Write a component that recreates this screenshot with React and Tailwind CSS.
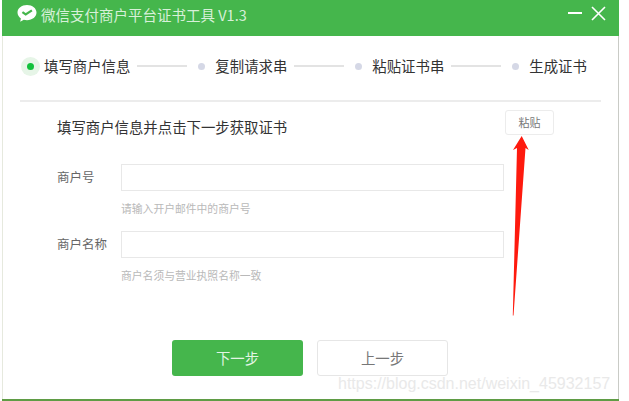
const cjk = { fontFamily: '"Noto Sans CJK SC", "Liberation Sans", sans-serif' };

function WeChatLogo() {
  return (
    <svg width="22" height="19" viewBox="0 0 22 19">
      <path d="M11 1C5.6 1 1.5 4.3 1.5 8.6c0 2.4 1.3 4.5 3.4 5.9L4.2 17.8l3.6-2c1 .3 2.1.4 3.2.4 5.4 0 9.5-3.4 9.5-7.6S16.4 1 11 1z" fill="#fff" />
      <path d="M6.4 8.2l3.3 2.3 6.2-4.2" fill="none" stroke="#45b64c" strokeWidth="2.2" />
    </svg>
  );
}

function Step({ label, active, line }) {
  return (
    <div className="flex items-center">
      {active ? (
        <div className="w-[19px] h-[19px] rounded-full bg-[#e6f5e7] flex items-center justify-center">
          <div className="w-[7px] h-[7px] rounded-full bg-[#12c13c]" />
        </div>
      ) : (
        <div className="w-[19px] h-[19px] flex items-center justify-center">
          <div className="w-[7px] h-[7px] rounded-full bg-[#d5d8e6]" />
        </div>
      )}
      <span className="ml-[4px] text-[14.4px] leading-5 text-[#333]">{label}</span>
      {line && <div className="ml-[7px] h-[2px] w-[50px] bg-[#e3e3e3]" />}
    </div>
  );
}

function Field({ label, hint }) {
  return (
    <div>
      <div className="flex items-center">
        <label className="w-[64px] text-[12.5px] text-[#666]">{label}</label>
        <input className="w-[383px] h-[27px] border border-[#e8e8e8] bg-white outline-none" />
      </div>
      <p className="ml-[64px] mt-[10px] text-[10.8px] leading-[14px] text-[#b9b9b9]">{hint}</p>
    </div>
  );
}

export default function App() {
  return (
    <div className="relative w-[629px] h-[401px] bg-white overflow-hidden" style={cjk}>
      <div className="w-[617px] h-[399px] ml-[2px] flex flex-col border-r border-l border-r-[#c9cbc6] border-l-[#e6e9de]">
        <header className="h-[36px] shrink-0 -mx-px bg-[#45b64c] flex items-start pl-[14px] pr-[13px] pt-[4px]">
          <WeChatLogo />
          <span className="ml-[3px] text-[14.5px] leading-[22px] text-[#d7f0d9]">微信支付商户平台证书工具 V1.3</span>
          <div className="ml-auto flex items-center gap-[9px] h-[18px]">
            <div className="w-[14px] h-[2px] bg-white" />
            <svg width="15" height="15" viewBox="0 0 15 15">
              <path d="M1 1l13 13M14 1L1 14" stroke="#fff" strokeWidth="1.6" />
            </svg>
          </div>
        </header>

        <nav className="mt-[20px] pl-[18px] flex items-center gap-[5px]">
          <Step label="填写商户信息" active line />
          <Step label="复制请求串" line />
          <Step label="粘贴证书串" line />
          <Step label="生成证书" />
        </nav>

        <div className="mt-[24px] ml-[17px] mr-[17px] h-[2px] bg-[#ececec]" />

        <div className="pl-[54px] pr-[64px] mt-[8px]">
          <div className="flex items-start justify-between h-[24px]">
            <h2 className="mt-[7px] text-[14.4px] leading-5 font-normal text-[#333]">填写商户信息并点击下一步获取证书</h2>
            <button className="w-[49px] h-[25px] border border-[#ececec] rounded-[3px] text-[11px] text-[#777] bg-white">粘贴</button>
          </div>
          <div className="mt-[30px] flex flex-col gap-[16px]">
            <Field label="商户号" hint="请输入开户邮件中的商户号" />
            <Field label="商户名称" hint="商户名须与营业执照名称一致" />
          </div>
        </div>

        <div className="mt-[58px] pl-[169px] flex gap-[14px]">
          <button className="w-[131px] h-[36px] rounded-[3px] bg-[#45b64c] text-[14.4px] text-[#e3f5e4]">下一步</button>
          <button className="w-[131px] h-[36px] rounded-[3px] border border-[#e6e6e6] bg-white text-[14.4px] text-[#777]">上一步</button>
        </div>
      </div>

      <div className="ml-[2px] h-[2px] w-[617px] bg-[#5f9c45]" />

      {/* annotation arrow drawn over the screenshot */}
      <svg className="absolute left-[505px] top-[134px]" width="32" height="184" viewBox="0 0 32 184">
        <path d="M16.7 2L23.7 16L20.5 14L8.5 181.5L7.8 181.5L12 14L8 16Z" fill="#fe1a0e" />
      </svg>

      {/* blog watermark */}
      <span className="absolute left-[338px] top-[374px] text-[16px] leading-5 text-[#e9e9e9]" style={{ fontFamily: '"Liberation Sans", sans-serif' }}>
        https://blog.csdn.net/weixin_45932157
      </span>
    </div>
  );
}
